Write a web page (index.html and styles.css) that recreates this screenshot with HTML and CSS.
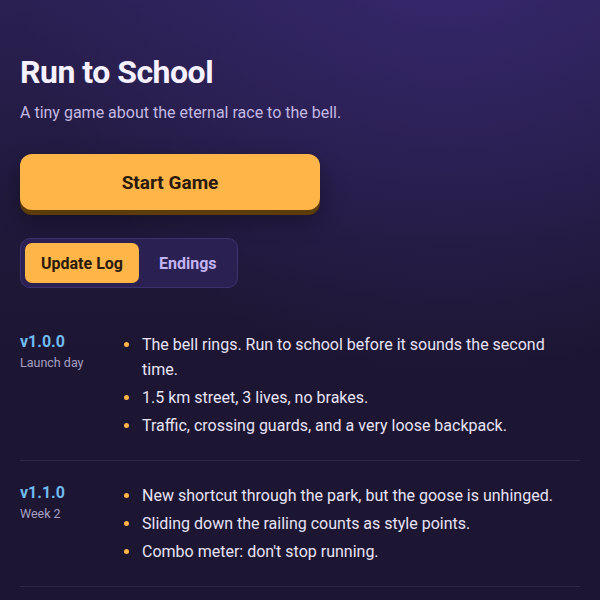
FILE: index.html
```html
<!DOCTYPE html>
<html lang="en">
<head>
    <meta charset="UTF-8">
    <meta name="viewport" content="width=device-width, initial-scale=1.0">
    <title>Run to School</title>
    <link rel="stylesheet" href="styles.css">
</head>
<body>
    <main class="page">
        <header class="hero">
            <h1>Run to School</h1>
            <p class="tagline">A tiny game about the eternal race to the bell.</p>
            <button class="start-button">Start Game</button>
        </header>

        <nav class="tabs">
            <button class="tab active">Update Log</button>
            <button class="tab">Endings</button>
        </nav>

        <section class="changelog">
            <article class="release">
                <div class="release-meta">
                    <div class="version">v1.0.0</div>
                    <div class="release-date">Launch day</div>
                </div>
                <ul class="notes">
                    <li>The bell rings. Run to school before it sounds the second time.</li>
                    <li>1.5 km street, 3 lives, no brakes.</li>
                    <li>Traffic, crossing guards, and a very loose backpack.</li>
                </ul>
            </article>
            <article class="release">
                <div class="release-meta">
                    <div class="version">v1.1.0</div>
                    <div class="release-date">Week 2</div>
                </div>
                <ul class="notes">
                    <li>New shortcut through the park, but the goose is unhinged.</li>
                    <li>Sliding down the railing counts as style points.</li>
                    <li>Combo meter: don't stop running.</li>
                </ul>
            </article>
        </section>
    </main>
</body>
</html>
```

FILE: styles.css
```css
:root {
    --accent: #ffb547;
    --accent-dark: #5c3c08;
    --text: #e8e3f6;
    --muted: #c3b9e2;
    --version: #70bbf0;
    --line: #2e2848;
}

* {
    box-sizing: border-box;
}

body {
    margin: 0;
    min-height: 100vh;
    font-family: Roboto, "Liberation Sans", Arial, sans-serif;
    color: var(--text);
    background-color: #1c1632;
    background-image:
        radial-gradient(circle at 75% -10%, rgba(62, 44, 126, 0.6), transparent 55%),
        linear-gradient(180deg, #2a2052 0%, #1f1839 40%, #1c1632 60%);
}

.page {
    padding: 53px 20px 0;
}

h1 {
    margin: 0;
    font-size: 32px;
    line-height: 1.2;
    font-weight: 700;
    letter-spacing: -0.5px;
    color: #f5f1ff;
}

.tagline {
    margin: 10px 0 0;
    font-size: 16px;
    line-height: 24px;
    color: var(--muted);
}

.start-button {
    display: block;
    width: 300px;
    height: 56px;
    margin-top: 29px;
    border: none;
    border-radius: 12px;
    background-color: var(--accent);
    color: #2a1a0c;
    font-family: inherit;
    font-size: 19px;
    font-weight: 700;
    box-shadow: 0 5px 0 var(--accent-dark), 0 10px 22px rgba(0, 0, 0, 0.35);
    cursor: pointer;
}

.tabs {
    display: inline-flex;
    gap: 4px;
    margin-top: 28px;
    padding: 4px;
    border: 1px solid #3d3270;
    border-radius: 10px;
    background-color: #2a2152;
}

.tab {
    height: 40px;
    padding: 0 16px;
    border: none;
    border-radius: 7px;
    background: transparent;
    color: #c2b3f2;
    font-family: inherit;
    font-size: 16px;
    font-weight: 700;
    cursor: pointer;
}

.tab.active {
    background-color: var(--accent);
    color: #2a1a0c;
}

.changelog {
    margin-top: 22px;
}

.release {
    display: grid;
    grid-template-columns: 100px 1fr;
    padding: 22px 0;
    border-bottom: 1px solid var(--line);
}

.version {
    font-size: 16px;
    line-height: 20px;
    font-weight: 700;
    color: var(--version);
}

.release-date {
    margin-top: 1px;
    font-size: 12.5px;
    line-height: 20px;
    color: #a7a0c2;
}

.notes {
    margin: 0;
    padding: 0;
    list-style: none;
    display: flex;
    flex-direction: column;
    gap: 3px;
}

.notes li {
    position: relative;
    padding-left: 22px;
    font-size: 16px;
    line-height: 25px;
}

.notes li::before {
    content: "";
    position: absolute;
    left: 4px;
    top: 10px;
    width: 5px;
    height: 5px;
    border-radius: 50%;
    background-color: var(--accent);
}
```
